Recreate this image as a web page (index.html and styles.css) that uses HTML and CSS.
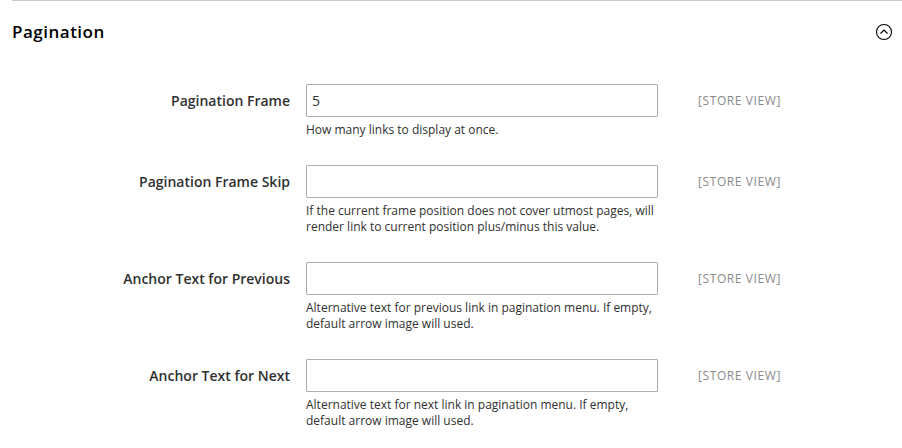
FILE: index.html
```html
<!DOCTYPE html>
<html>
<head>
<meta charset="utf-8">
<link rel="stylesheet" href="styles.css">
</head>
<body>
<div class="wrap">
  <section class="section">
    <div class="section-head">
      <h2 class="section-title">Pagination</h2>
      <svg class="toggle" width="18" height="18" viewBox="0 0 18 18">
        <circle cx="9" cy="9" r="7.5" fill="none" stroke="#000" stroke-width="1.1"/>
        <polyline points="5.5,10.5 9,7 12.5,10.5" fill="none" stroke="#000" stroke-width="1.2"/>
      </svg>
    </div>
    <div class="fields">
      <div class="field">
        <label class="label">Pagination Frame</label>
        <div class="control">
          <input class="input" type="text" value="5">
          <div class="note">How many links to display at once.</div>
        </div>
        <div class="scope">[STORE VIEW]</div>
      </div>
      <div class="field">
        <label class="label">Pagination Frame Skip</label>
        <div class="control">
          <input class="input" type="text" value="">
          <div class="note">If the current frame position does not cover utmost pages, will render link to current position plus/minus this value.</div>
        </div>
        <div class="scope">[STORE VIEW]</div>
      </div>
      <div class="field">
        <label class="label">Anchor Text for Previous</label>
        <div class="control">
          <input class="input" type="text" value="">
          <div class="note">Alternative text for previous link in pagination menu. If empty, default arrow image will used.</div>
        </div>
        <div class="scope">[STORE VIEW]</div>
      </div>
      <div class="field">
        <label class="label">Anchor Text for Next</label>
        <div class="control">
          <input class="input" type="text" value="">
          <div class="note">Alternative text for next link in pagination menu. If empty, default arrow image will used.</div>
        </div>
        <div class="scope">[STORE VIEW]</div>
      </div>
    </div>
  </section>
</div>
</body>
</html>
```
FILE: styles.css
```css
html, body {
  margin: 0;
  padding: 0;
  background: #fff;
}
body {
  font-family: "Open Sans", "Noto Sans", sans-serif;
  color: #303030;
  overflow: hidden;
}
.wrap {
  padding-left: 12px;
}
.section {
  border-top: 1px solid #cccccc;
}
.section-head {
  height: 60px;
  display: flex;
  align-items: center;
  justify-content: space-between;
  padding-right: 9px;
}
.section-title {
  margin: 0;
  font-size: 17px;
  font-weight: 600;
  color: #000;
  letter-spacing: 0.5px;
}
.toggle {
  display: block;
  margin-top: 2px;
}
.fields {
  padding-top: 23px;
}
.field {
  display: grid;
  grid-template-columns: 278px 352px auto;
  column-gap: 16px;
  margin-bottom: 27px;
  align-items: start;
}
.label {
  text-align: right;
  font-size: 14px;
  font-weight: 600;
  line-height: 33px;
  color: #303030;
}
.control {
  display: flex;
  flex-direction: column;
}
.input {
  box-sizing: border-box;
  width: 352px;
  height: 33px;
  margin: 0;
  border: 1px solid #adadad;
  border-radius: 1px;
  padding: 0 5px;
  font-family: "Open Sans", "Noto Sans", sans-serif;
  font-size: 14px;
  color: #303030;
  outline: none;
  background: #fff;
}
.note {
  margin-top: 5px;
  font-size: 12px;
  line-height: 16px;
  color: #303030;
  padding-right: 4px;
}
.scope {
  margin-left: 24px;
  font-size: 12px;
  letter-spacing: 0.6px;
  line-height: 34px;
  color: #8a8a8a;
}
```
